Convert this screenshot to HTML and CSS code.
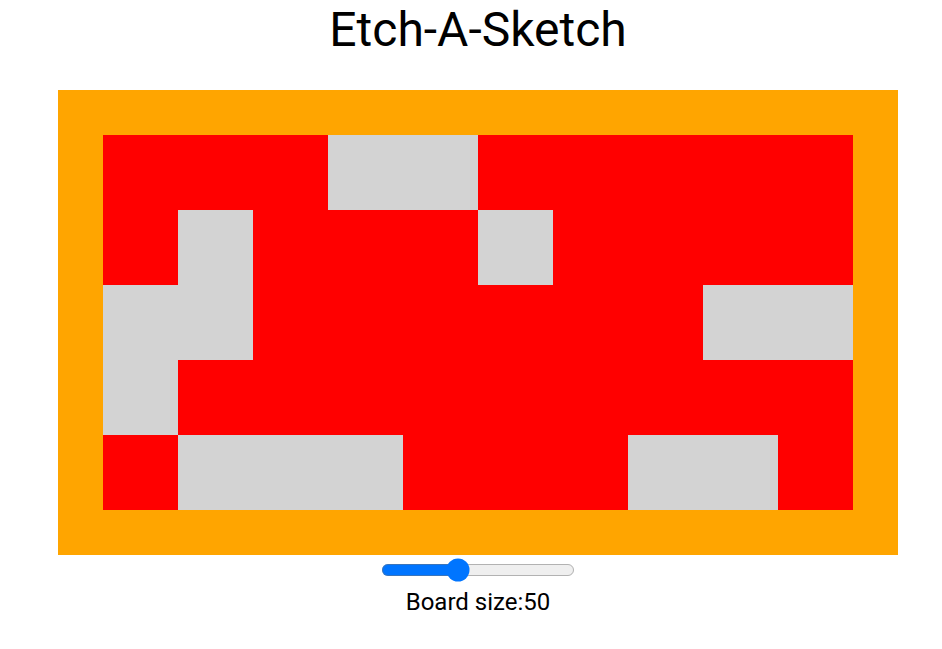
FILE: index.html
```html
<!DOCTYPE html>
<html>
<head>
<meta charset="utf-8">
<title>Etch-A-Sketch</title>
<link rel="stylesheet" href="styles.css">
</head>
<body>
<div class="page">
  <h1 class="title">Etch-A-Sketch</h1>
  <div class="board">
    <div class="grid">
      <div class="cell r"></div><div class="cell r"></div><div class="cell r"></div><div class="cell g"></div><div class="cell g"></div><div class="cell r"></div><div class="cell r"></div><div class="cell r"></div><div class="cell r"></div><div class="cell r"></div>
      <div class="cell r"></div><div class="cell g"></div><div class="cell r"></div><div class="cell r"></div><div class="cell r"></div><div class="cell g"></div><div class="cell r"></div><div class="cell r"></div><div class="cell r"></div><div class="cell r"></div>
      <div class="cell g"></div><div class="cell g"></div><div class="cell r"></div><div class="cell r"></div><div class="cell r"></div><div class="cell r"></div><div class="cell r"></div><div class="cell r"></div><div class="cell g"></div><div class="cell g"></div>
      <div class="cell g"></div><div class="cell r"></div><div class="cell r"></div><div class="cell r"></div><div class="cell r"></div><div class="cell r"></div><div class="cell r"></div><div class="cell r"></div><div class="cell r"></div><div class="cell r"></div>
      <div class="cell r"></div><div class="cell g"></div><div class="cell g"></div><div class="cell g"></div><div class="cell r"></div><div class="cell r"></div><div class="cell r"></div><div class="cell g"></div><div class="cell g"></div><div class="cell r"></div>
    </div>
  </div>
  <input class="slider" type="range" min="1" max="130" value="50">
  <div class="label">Board size:50</div>
</div>
</body>
</html>
```
FILE: styles.css
```css
html, body {
  margin: 0;
  padding: 0;
  background: #fff;
}
body {
  font-family: Roboto, "Noto Sans", "Liberation Sans", sans-serif;
  color: #000;
}
.page {
  width: 840px;
  margin-left: 58px;
  display: flex;
  flex-direction: column;
  align-items: center;
}
.title {
  margin: 2px 0 32px;
  font-size: 48px;
  line-height: 56px;
  font-weight: 400;
  text-align: center;
}
.board {
  width: 750px;
  padding: 45px;
  background: #ffa500;
}
.grid {
  display: grid;
  grid-template-columns: repeat(10, 75px);
  grid-template-rows: repeat(5, 75px);
}
.cell.r { background: #ff0000; }
.cell.g { background: #d3d3d3; }
.slider {
  zoom: 1.5;
  margin: 2px;
}
.label {
  margin-top: 3px;
  font-size: 24px;
  line-height: 28px;
}
```
